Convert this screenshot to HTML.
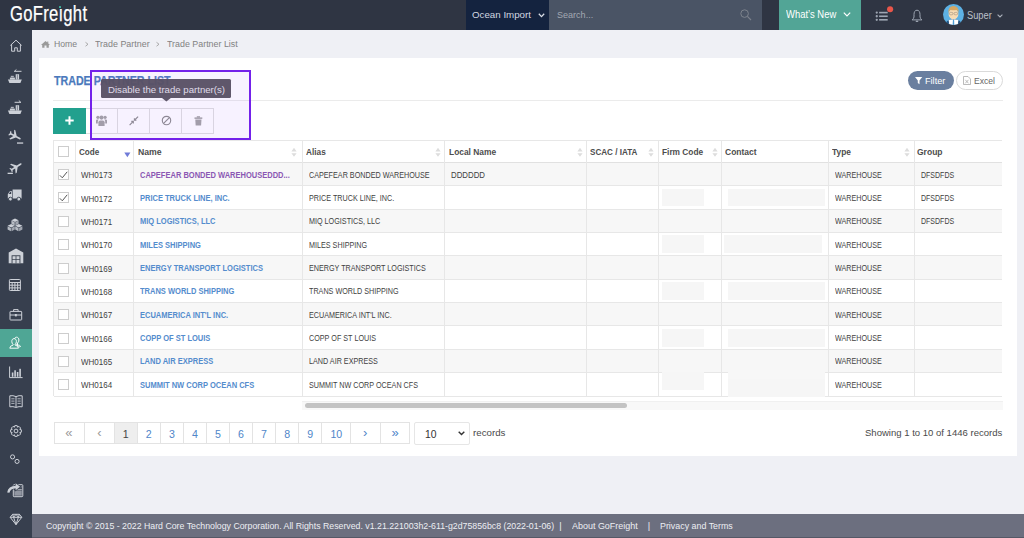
<!DOCTYPE html><html><head><meta charset='utf-8'><style>
*{margin:0;padding:0;box-sizing:border-box}
html,body{width:1024px;height:538px;overflow:hidden;background:#eff0f5;font-family:"Liberation Sans", sans-serif;}
.abs{position:absolute}
.t{position:absolute;white-space:nowrap;line-height:1}
svg{position:absolute;overflow:visible}
</style></head><body>
<div class="abs" style="left:0;top:0;width:1024px;height:30px;background:#2f3543"></div>
<div class="t" style="left:10.4px;top:2.92px;font-size:21.6px;color:#fff;transform-origin:0 0;transform:scaleX(0.77);letter-spacing:0.35px;-webkit-text-stroke:0.25px #fff">GoFre&#305;ght</div>
<div class="abs" style="left:59.2px;top:6.2px;width:2.1px;height:2.1px;border-radius:0.5px;background:#3fb59f"></div>
<div class="abs" style="left:466.4px;top:0;width:82.6px;height:29.8px;background:#14233f"></div>
<div class="t" style="left:471.50px;top:10.17px;font-size:9.6px;color:#d2d7e0;transform-origin:0 0;transform:scaleX(1.0145);">Ocean Import</div>
<svg style="left:538px;top:12.5px" width="7" height="5"><path d="M0.8 0.8 L3.5 3.6 L6.2 0.8" stroke="#d9dde6" stroke-width="1.3" fill="none"/></svg>
<div class="abs" style="left:549px;top:0;width:213.3px;height:29.8px;background:#4a5465"></div>
<div class="t" style="left:557.20px;top:10.07px;font-size:9.6px;color:#a2a8b2;transform-origin:0 0;transform:scaleX(0.9422);">Search...</div>
<svg style="left:740px;top:9px" width="12" height="12"><circle cx="4.6" cy="4.6" r="3.8" stroke="#7d838d" stroke-width="1" fill="none"/><path d="M7.4 7.4 L11 11" stroke="#7d838d" stroke-width="1.1"/></svg>
<div class="abs" style="left:779.2px;top:0;width:81.8px;height:29.8px;background:#52a596"></div>
<div class="t" style="left:786.30px;top:9.73px;font-size:10.0px;color:#fff;transform-origin:0 0;transform:scaleX(0.9442);">What’s New</div>
<svg style="left:843px;top:12px" width="8" height="5"><path d="M0.8 0.6 L4 3.8 L7.2 0.6" stroke="#fff" stroke-width="1.2" fill="none"/></svg>
<svg style="left:875px;top:11px" width="14" height="11"><circle cx="1.75" cy="1.6" r="1.15" fill="#9ea6b3"/><circle cx="1.75" cy="5.25" r="1.15" fill="#9ea6b3"/><circle cx="1.75" cy="8.8" r="1.15" fill="#9ea6b3"/><rect x="4.1" y="0.8" width="8.6" height="1.6" fill="#9ea6b3"/><rect x="4.1" y="4.45" width="8.6" height="1.6" fill="#9ea6b3"/><rect x="4.1" y="8" width="8.6" height="1.6" fill="#9ea6b3"/></svg>
<svg style="left:886.5px;top:6px" width="7" height="7"><circle cx="3.1" cy="3.2" r="3.05" fill="#e9564a"/></svg>
<svg style="left:910.5px;top:9px" width="12" height="14"><path d="M6 1.2 C3.9 1.2 3 3.1 3 5.6 L3 8 Q2.8 9.5 1.1 10.9 L10.9 10.9 Q9.2 9.5 9 8 L9 5.6 C9 3.1 8.1 1.2 6 1.2 Z" stroke="#9ea6b3" stroke-width="1" fill="none"/><path d="M4.9 11.9 Q6 13.2 7.1 11.9" stroke="#9ea6b3" stroke-width="1.1" fill="none"/></svg>
<svg style="left:942.9px;top:4px" width="21" height="21"><defs><clipPath id="avc"><circle cx="10.5" cy="10.5" r="10.5"/></clipPath></defs><circle cx="10.5" cy="10.5" r="10.5" fill="#5db1e4"/><g clip-path="url(#avc)"><path d="M1.5 22 Q2.5 15.6 10.5 15 Q18.5 15.6 19.5 22 Z" fill="#1f4f7c"/><path d="M5.6 16 Q10.5 14.3 15.4 16 L14.6 22 H6.4 Z" fill="#ffffff"/><path d="M10 15.2 H11 L11.4 22 H9.6 Z" fill="#4e9ed6"/><ellipse cx="10.5" cy="9.9" rx="4.9" ry="5.3" fill="#f8dcb4"/><path d="M5.4 9 Q5 2.1 10.5 2.1 Q16 2.1 15.6 9 Q15 6.2 13.5 5.9 Q10.5 6.6 7.5 5.9 Q6 6.2 5.4 9 Z" fill="#d6a763"/><rect x="6.5" y="8.4" width="3.4" height="2.4" rx="0.9" fill="none" stroke="#9b8a7a" stroke-width="0.55"/><rect x="11.1" y="8.4" width="3.4" height="2.4" rx="0.9" fill="none" stroke="#9b8a7a" stroke-width="0.55"/></g></svg>
<div class="t" style="left:966.50px;top:10.93px;font-size:10.0px;color:#bcc1ca;transform-origin:0 0;transform:scaleX(0.9293);">Super</div>
<svg style="left:997px;top:13.5px" width="6" height="4"><path d="M0.6 0.6 L3 3 L5.4 0.6" stroke="#aab0ba" stroke-width="1.1" fill="none"/></svg>
<div class="abs" style="left:0;top:30px;width:32px;height:508px;background:#373f4e"></div>
<div class="abs" style="left:0;top:328.7px;width:32px;height:28.2px;background:#4fa695"></div>
<svg style="left:41px;top:41px" width="9" height="7"><path d="M4.5 0 L0 3.9 L1.2 3.9 L1.2 6.8 L3.5 6.8 L3.5 4.6 L5.5 4.6 L5.5 6.8 L7.8 6.8 L7.8 3.9 L9 3.9 L7.3 2.4 L7.3 0.5 L6.3 0.5 L6.3 1.5 Z" fill="#9a9a9a"/></svg>
<div class="t" style="left:54.30px;top:39.09px;font-size:9.7px;color:#828282;transform-origin:0 0;transform:scaleX(0.8966);">Home</div>
<svg style="left:84.6px;top:42.2px" width="4" height="5"><path d="M0.5 0.3 L3 2.25 L0.5 4.2" stroke="#a0a0a0" stroke-width="0.9" fill="none"/></svg>
<div class="t" style="left:95.00px;top:39.09px;font-size:9.7px;color:#828282;transform-origin:0 0;transform:scaleX(0.9195);">Trade Partner</div>
<svg style="left:156.4px;top:42.2px" width="4" height="5"><path d="M0.5 0.3 L3 2.25 L0.5 4.2" stroke="#a0a0a0" stroke-width="0.9" fill="none"/></svg>
<div class="t" style="left:167.20px;top:39.09px;font-size:9.7px;color:#828282;transform-origin:0 0;transform:scaleX(0.9162);">Trade Partner List</div>
<div class="abs" style="left:39px;top:58px;width:977.5px;height:398px;background:#fff"></div>
<div class="t" style="left:54.00px;top:74.50px;font-size:12.4px;font-weight:bold;color:#4a79bc;transform-origin:0 0;transform:scaleX(0.8606);-webkit-text-stroke:0.25px #4a79bc">TRADE PARTNER LIST</div>
<div class="abs" style="left:53px;top:100px;width:949.5px;height:1px;background:#ebebeb"></div>
<div class="abs" style="left:908px;top:71px;width:45.7px;height:19px;border-radius:10px;background:#6a7f9f"></div>
<svg style="left:914.6px;top:77.4px" width="8" height="8"><path d="M0 0 L7.3 0 L4.5 3.4 L4.5 7.2 L2.8 6.1 L2.8 3.4 Z" fill="#fff"/></svg>
<div class="t" style="left:924.70px;top:75.96px;font-size:9.5px;color:#fff;transform-origin:0 0;transform:scaleX(0.9616);">Filter</div>
<div class="abs" style="left:956.4px;top:71px;width:46.2px;height:19px;border-radius:10px;background:#fff;border:1px solid #dadada"></div>
<svg style="left:963.4px;top:76.3px" width="8" height="9"><path d="M0.5 0.5 L5 0.5 L7.5 3 L7.5 8.5 L0.5 8.5 Z" stroke="#aaa" stroke-width="0.8" fill="none"/><path d="M2.3 3.8 L5.5 7.3 M5.5 3.8 L2.3 7.3" stroke="#aaa" stroke-width="0.8"/></svg>
<div class="t" style="left:974.00px;top:75.96px;font-size:9.5px;color:#666;transform-origin:0 0;transform:scaleX(0.9040);">Excel</div>
<div class="abs" style="left:53.2px;top:107.8px;width:32.6px;height:25.8px;background:#22a08e"></div>
<svg style="left:65px;top:116.2px" width="9" height="9"><path d="M4.5 0.3 V8.7 M0.3 4.5 H8.7" stroke="#fff" stroke-width="2"/></svg>
<div class="abs" style="left:85.8px;top:107.5px;width:128.3px;height:26.2px;border:1px solid #dfdfdf;border-left:none"></div>
<div class="abs" style="left:117.1px;top:107.5px;width:1px;height:26.2px;background:#dfdfdf"></div>
<div class="abs" style="left:148.9px;top:107.5px;width:1px;height:26.2px;background:#dfdfdf"></div>
<div class="abs" style="left:180.9px;top:107.5px;width:1px;height:26.2px;background:#dfdfdf"></div>
<svg style="left:96px;top:115px" width="11" height="11"><circle cx="5.5" cy="2.6" r="2.1" fill="#a3a3a3"/><circle cx="1.9" cy="2.3" r="1.6" fill="#a3a3a3"/><circle cx="9.1" cy="2.3" r="1.6" fill="#a3a3a3"/><path d="M2.4 10.9 V7.2 Q2.4 5.4 4.2 5.4 H6.8 Q8.6 5.4 8.6 7.2 V10.9 Z" fill="#a3a3a3"/><path d="M0 8.6 V5.6 Q0 4.4 1.2 4.4 H2.8 Q1.8 5.2 1.8 6.6 V8.6 Z M11 8.6 V5.6 Q11 4.4 9.8 4.4 H8.2 Q9.2 5.2 9.2 6.6 V8.6 Z" fill="#a3a3a3"/></svg>
<svg style="left:128.5px;top:116.2px" width="10" height="10"><path d="M0.6 9.1 L4 5.7 M5.7 4 L9.1 0.6" stroke="#8c8c8c" stroke-width="1.15"/><path d="M2.3 5.4 L4.3 5.4 L4.3 7.4 M5.4 2.3 L5.4 4.3 L7.4 4.3" stroke="#8c8c8c" stroke-width="1.1" fill="none"/></svg>
<svg style="left:160.5px;top:115.3px" width="11" height="11"><circle cx="5.5" cy="5.5" r="4.2" stroke="#8c8c8c" stroke-width="1.15" fill="none"/><path d="M2.6 8.4 L8.4 2.6" stroke="#8c8c8c" stroke-width="1.15"/></svg>
<svg style="left:193.5px;top:116px" width="9" height="10"><rect x="2.8" y="0.2" width="3.2" height="1.5" fill="#a3a3a3"/><rect x="0.5" y="1.4" width="7.8" height="1.5" fill="#a3a3a3"/><path d="M1.3 3.4 L7.5 3.4 L7.1 9.4 L1.7 9.4 Z" fill="#a3a3a3"/></svg>
<div class="abs" style="left:53.5px;top:162.50px;width:948.50px;height:23.35px;background:#f7f7f7"></div>
<div class="abs" style="left:53.5px;top:209.20px;width:948.50px;height:23.35px;background:#f7f7f7"></div>
<div class="abs" style="left:53.5px;top:255.90px;width:948.50px;height:23.35px;background:#f7f7f7"></div>
<div class="abs" style="left:53.5px;top:302.60px;width:948.50px;height:23.35px;background:#f7f7f7"></div>
<div class="abs" style="left:53.5px;top:349.30px;width:948.50px;height:23.35px;background:#f7f7f7"></div>
<div class="abs" style="left:53.5px;top:139.80px;width:948.50px;height:1px;background:#e7e7e7"></div>
<div class="abs" style="left:53.5px;top:161.70px;width:948.50px;height:1.6px;background:#e1e1e1"></div>
<div class="abs" style="left:53.5px;top:185.35px;width:948.50px;height:1px;background:#e7e7e7"></div>
<div class="abs" style="left:53.5px;top:208.70px;width:948.50px;height:1px;background:#e7e7e7"></div>
<div class="abs" style="left:53.5px;top:232.05px;width:948.50px;height:1px;background:#e7e7e7"></div>
<div class="abs" style="left:53.5px;top:255.40px;width:948.50px;height:1px;background:#e7e7e7"></div>
<div class="abs" style="left:53.5px;top:278.75px;width:948.50px;height:1px;background:#e7e7e7"></div>
<div class="abs" style="left:53.5px;top:302.10px;width:948.50px;height:1px;background:#e7e7e7"></div>
<div class="abs" style="left:53.5px;top:325.45px;width:948.50px;height:1px;background:#e7e7e7"></div>
<div class="abs" style="left:53.5px;top:348.80px;width:948.50px;height:1px;background:#e7e7e7"></div>
<div class="abs" style="left:53.5px;top:372.15px;width:948.50px;height:1px;background:#e7e7e7"></div>
<div class="abs" style="left:53.5px;top:395.50px;width:948.50px;height:1px;background:#e7e7e7"></div>
<div class="abs" style="left:53.00px;top:139.80px;width:1px;height:256.20px;background:#e7e7e7"></div>
<div class="abs" style="left:75.10px;top:139.80px;width:1px;height:256.20px;background:#e7e7e7"></div>
<div class="abs" style="left:133.20px;top:139.80px;width:1px;height:256.20px;background:#e7e7e7"></div>
<div class="abs" style="left:301.70px;top:139.80px;width:1px;height:256.20px;background:#e7e7e7"></div>
<div class="abs" style="left:443.90px;top:139.80px;width:1px;height:256.20px;background:#e7e7e7"></div>
<div class="abs" style="left:586.10px;top:139.80px;width:1px;height:256.20px;background:#e7e7e7"></div>
<div class="abs" style="left:657.50px;top:139.80px;width:1px;height:256.20px;background:#e7e7e7"></div>
<div class="abs" style="left:721.00px;top:139.80px;width:1px;height:256.20px;background:#e7e7e7"></div>
<div class="abs" style="left:828.30px;top:139.80px;width:1px;height:256.20px;background:#e7e7e7"></div>
<div class="abs" style="left:914.10px;top:139.80px;width:1px;height:256.20px;background:#e7e7e7"></div>
<div class="abs" style="left:662.00px;top:188.75px;width:42.20px;height:17.70px;background:#f6f6f6"></div>
<div class="abs" style="left:728.00px;top:188.75px;width:96.80px;height:17.70px;background:#f6f6f6"></div>
<div class="abs" style="left:662.00px;top:235.45px;width:42.20px;height:17.70px;background:#f6f6f6"></div>
<div class="abs" style="left:723.60px;top:235.45px;width:98.10px;height:17.70px;background:#f6f6f6"></div>
<div class="abs" style="left:662.00px;top:282.15px;width:42.20px;height:17.70px;background:#f6f6f6"></div>
<div class="abs" style="left:728.00px;top:282.15px;width:96.80px;height:17.70px;background:#f6f6f6"></div>
<div class="abs" style="left:662.00px;top:328.85px;width:42.20px;height:17.70px;background:#f6f6f6"></div>
<div class="abs" style="left:728.00px;top:328.85px;width:96.80px;height:17.70px;background:#f6f6f6"></div>
<div class="abs" style="left:662.00px;top:372.00px;width:42.20px;height:17.60px;background:#f6f6f6"></div>
<div class="abs" style="left:728.00px;top:366.00px;width:96.80px;height:13.40px;background:#f7f7f7"></div>
<div class="abs" style="left:728.00px;top:379.40px;width:96.80px;height:17.60px;background:#f6f6f6"></div>
<div class="t" style="left:78.90px;top:146.54px;font-size:9.4px;font-weight:bold;color:#4d4d4d;transform-origin:0 0;transform:scaleX(0.8638);">Code</div>
<div class="t" style="left:137.70px;top:146.54px;font-size:9.4px;font-weight:bold;color:#4d4d4d;transform-origin:0 0;transform:scaleX(0.9257);">Name</div>
<svg style="left:291.40px;top:146.7px" width="6" height="11"><path d="M0.4 4.4 L3 0.8 L5.6 4.4Z M0.4 6.2 L3 9.8 L5.6 6.2Z" fill="#dddddd"/></svg>
<div class="t" style="left:306.00px;top:146.54px;font-size:9.4px;font-weight:bold;color:#4d4d4d;transform-origin:0 0;transform:scaleX(0.8800);">Alias</div>
<svg style="left:434.80px;top:146.7px" width="6" height="11"><path d="M0.4 4.4 L3 0.8 L5.6 4.4Z M0.4 6.2 L3 9.8 L5.6 6.2Z" fill="#dddddd"/></svg>
<div class="t" style="left:448.70px;top:146.54px;font-size:9.4px;font-weight:bold;color:#4d4d4d;transform-origin:0 0;transform:scaleX(0.8964);">Local Name</div>
<svg style="left:577.00px;top:146.7px" width="6" height="11"><path d="M0.4 4.4 L3 0.8 L5.6 4.4Z M0.4 6.2 L3 9.8 L5.6 6.2Z" fill="#dddddd"/></svg>
<div class="t" style="left:590.30px;top:146.54px;font-size:9.4px;font-weight:bold;color:#4d4d4d;transform-origin:0 0;transform:scaleX(0.8636);">SCAC / IATA</div>
<svg style="left:648.30px;top:146.7px" width="6" height="11"><path d="M0.4 4.4 L3 0.8 L5.6 4.4Z M0.4 6.2 L3 9.8 L5.6 6.2Z" fill="#dddddd"/></svg>
<div class="t" style="left:661.60px;top:146.54px;font-size:9.4px;font-weight:bold;color:#4d4d4d;transform-origin:0 0;transform:scaleX(0.8864);">Firm Code</div>
<svg style="left:711.70px;top:146.7px" width="6" height="11"><path d="M0.4 4.4 L3 0.8 L5.6 4.4Z M0.4 6.2 L3 9.8 L5.6 6.2Z" fill="#dddddd"/></svg>
<div class="t" style="left:725.30px;top:146.54px;font-size:9.4px;font-weight:bold;color:#4d4d4d;transform-origin:0 0;transform:scaleX(0.9060);">Contact</div>
<div class="t" style="left:832.30px;top:146.54px;font-size:9.4px;font-weight:bold;color:#4d4d4d;transform-origin:0 0;transform:scaleX(0.8944);">Type</div>
<svg style="left:904.30px;top:146.7px" width="6" height="11"><path d="M0.4 4.4 L3 0.8 L5.6 4.4Z M0.4 6.2 L3 9.8 L5.6 6.2Z" fill="#dddddd"/></svg>
<div class="t" style="left:917.40px;top:146.54px;font-size:9.4px;font-weight:bold;color:#4d4d4d;transform-origin:0 0;transform:scaleX(0.9079);">Group</div>
<svg style="left:123.6px;top:151.8px" width="7" height="6"><path d="M0.3 0.4 L6.4 0.4 L3.35 5.2 Z" fill="#707bd8"/></svg>
<div class="abs" style="left:58px;top:146px;width:11px;height:11px;border:1px solid #cdcdcd;background:#fff"></div>
<div class="abs" style="left:58px;top:169.10px;width:11px;height:11px;border:1px solid #cdcdcd;background:#fff"></div>
<svg style="left:59px;top:170.50px" width="9" height="8"><path d="M0.8 4.3 L3.3 6.8 L8.2 0.8" stroke="#555" stroke-width="1" fill="none"/></svg>
<div class="t" style="left:81.30px;top:171.30px;font-size:8.5px;color:#3f3f3f;transform-origin:0 0;transform:scaleX(0.9400);">WH0173</div>
<div class="t" style="left:140.00px;top:170.67px;font-size:8.3px;font-weight:bold;color:#8a57b3;transform-origin:0 0;transform:scaleX(0.9050);">CAPEFEAR BONDED WAREHOUSEDDD...</div>
<div class="t" style="left:308.80px;top:171.56px;font-size:8.2px;color:#3f3f3f;transform-origin:0 0;transform:scaleX(0.8800);">CAPEFEAR BONDED WAREHOUSE</div>
<div class="t" style="left:450.60px;top:171.56px;font-size:8.2px;color:#3f3f3f;transform-origin:0 0;transform:scaleX(0.9597);">DDDDDD</div>
<div class="t" style="left:835.10px;top:171.56px;font-size:8.2px;color:#3f3f3f;transform-origin:0 0;transform:scaleX(0.8773);">WAREHOUSE</div>
<div class="t" style="left:920.60px;top:171.56px;font-size:8.2px;color:#3f3f3f;transform-origin:0 0;transform:scaleX(0.8574);">DFSDFDS</div>
<div class="abs" style="left:58px;top:192.45px;width:11px;height:11px;border:1px solid #cdcdcd;background:#fff"></div>
<svg style="left:59px;top:193.85px" width="9" height="8"><path d="M0.8 4.3 L3.3 6.8 L8.2 0.8" stroke="#555" stroke-width="1" fill="none"/></svg>
<div class="t" style="left:81.30px;top:194.65px;font-size:8.5px;color:#3f3f3f;transform-origin:0 0;transform:scaleX(0.9400);">WH0172</div>
<div class="t" style="left:140.00px;top:194.02px;font-size:8.3px;font-weight:bold;color:#548ccd;transform-origin:0 0;transform:scaleX(0.9050);">PRICE TRUCK LINE, INC.</div>
<div class="t" style="left:308.80px;top:194.91px;font-size:8.2px;color:#3f3f3f;transform-origin:0 0;transform:scaleX(0.8800);">PRICE TRUCK LINE, INC.</div>
<div class="t" style="left:835.10px;top:194.91px;font-size:8.2px;color:#3f3f3f;transform-origin:0 0;transform:scaleX(0.8773);">WAREHOUSE</div>
<div class="t" style="left:920.60px;top:194.91px;font-size:8.2px;color:#3f3f3f;transform-origin:0 0;transform:scaleX(0.8574);">DFSDFDS</div>
<div class="abs" style="left:58px;top:215.80px;width:11px;height:11px;border:1px solid #cdcdcd;background:#fff"></div>
<div class="t" style="left:81.30px;top:218.00px;font-size:8.5px;color:#3f3f3f;transform-origin:0 0;transform:scaleX(0.9400);">WH0171</div>
<div class="t" style="left:140.00px;top:217.37px;font-size:8.3px;font-weight:bold;color:#548ccd;transform-origin:0 0;transform:scaleX(0.9050);">MIQ LOGISTICS, LLC</div>
<div class="t" style="left:308.80px;top:218.26px;font-size:8.2px;color:#3f3f3f;transform-origin:0 0;transform:scaleX(0.8800);">MIQ LOGISTICS, LLC</div>
<div class="t" style="left:835.10px;top:218.26px;font-size:8.2px;color:#3f3f3f;transform-origin:0 0;transform:scaleX(0.8773);">WAREHOUSE</div>
<div class="t" style="left:920.60px;top:218.26px;font-size:8.2px;color:#3f3f3f;transform-origin:0 0;transform:scaleX(0.8574);">DFSDFDS</div>
<div class="abs" style="left:58px;top:239.15px;width:11px;height:11px;border:1px solid #cdcdcd;background:#fff"></div>
<div class="t" style="left:81.30px;top:241.35px;font-size:8.5px;color:#3f3f3f;transform-origin:0 0;transform:scaleX(0.9400);">WH0170</div>
<div class="t" style="left:140.00px;top:240.72px;font-size:8.3px;font-weight:bold;color:#548ccd;transform-origin:0 0;transform:scaleX(0.9050);">MILES SHIPPING</div>
<div class="t" style="left:308.80px;top:241.61px;font-size:8.2px;color:#3f3f3f;transform-origin:0 0;transform:scaleX(0.8800);">MILES SHIPPING</div>
<div class="t" style="left:835.10px;top:241.61px;font-size:8.2px;color:#3f3f3f;transform-origin:0 0;transform:scaleX(0.8773);">WAREHOUSE</div>
<div class="abs" style="left:58px;top:262.50px;width:11px;height:11px;border:1px solid #cdcdcd;background:#fff"></div>
<div class="t" style="left:81.30px;top:264.70px;font-size:8.5px;color:#3f3f3f;transform-origin:0 0;transform:scaleX(0.9400);">WH0169</div>
<div class="t" style="left:140.00px;top:264.07px;font-size:8.3px;font-weight:bold;color:#548ccd;transform-origin:0 0;transform:scaleX(0.9050);">ENERGY TRANSPORT LOGISTICS</div>
<div class="t" style="left:308.80px;top:264.96px;font-size:8.2px;color:#3f3f3f;transform-origin:0 0;transform:scaleX(0.8800);">ENERGY TRANSPORT LOGISTICS</div>
<div class="t" style="left:835.10px;top:264.96px;font-size:8.2px;color:#3f3f3f;transform-origin:0 0;transform:scaleX(0.8773);">WAREHOUSE</div>
<div class="abs" style="left:58px;top:285.85px;width:11px;height:11px;border:1px solid #cdcdcd;background:#fff"></div>
<div class="t" style="left:81.30px;top:288.05px;font-size:8.5px;color:#3f3f3f;transform-origin:0 0;transform:scaleX(0.9400);">WH0168</div>
<div class="t" style="left:140.00px;top:287.42px;font-size:8.3px;font-weight:bold;color:#548ccd;transform-origin:0 0;transform:scaleX(0.9050);">TRANS WORLD SHIPPING</div>
<div class="t" style="left:308.80px;top:288.31px;font-size:8.2px;color:#3f3f3f;transform-origin:0 0;transform:scaleX(0.8800);">TRANS WORLD SHIPPING</div>
<div class="t" style="left:835.10px;top:288.31px;font-size:8.2px;color:#3f3f3f;transform-origin:0 0;transform:scaleX(0.8773);">WAREHOUSE</div>
<div class="abs" style="left:58px;top:309.20px;width:11px;height:11px;border:1px solid #cdcdcd;background:#fff"></div>
<div class="t" style="left:81.30px;top:311.40px;font-size:8.5px;color:#3f3f3f;transform-origin:0 0;transform:scaleX(0.9400);">WH0167</div>
<div class="t" style="left:140.00px;top:310.77px;font-size:8.3px;font-weight:bold;color:#548ccd;transform-origin:0 0;transform:scaleX(0.9050);">ECUAMERICA INT'L INC.</div>
<div class="t" style="left:308.80px;top:311.66px;font-size:8.2px;color:#3f3f3f;transform-origin:0 0;transform:scaleX(0.8800);">ECUAMERICA INT'L INC.</div>
<div class="t" style="left:835.10px;top:311.66px;font-size:8.2px;color:#3f3f3f;transform-origin:0 0;transform:scaleX(0.8773);">WAREHOUSE</div>
<div class="abs" style="left:58px;top:332.55px;width:11px;height:11px;border:1px solid #cdcdcd;background:#fff"></div>
<div class="t" style="left:81.30px;top:334.75px;font-size:8.5px;color:#3f3f3f;transform-origin:0 0;transform:scaleX(0.9400);">WH0166</div>
<div class="t" style="left:140.00px;top:334.12px;font-size:8.3px;font-weight:bold;color:#548ccd;transform-origin:0 0;transform:scaleX(0.9050);">COPP OF ST LOUIS</div>
<div class="t" style="left:308.80px;top:335.01px;font-size:8.2px;color:#3f3f3f;transform-origin:0 0;transform:scaleX(0.8800);">COPP OF ST LOUIS</div>
<div class="t" style="left:835.10px;top:335.01px;font-size:8.2px;color:#3f3f3f;transform-origin:0 0;transform:scaleX(0.8773);">WAREHOUSE</div>
<div class="abs" style="left:58px;top:355.90px;width:11px;height:11px;border:1px solid #cdcdcd;background:#fff"></div>
<div class="t" style="left:81.30px;top:358.10px;font-size:8.5px;color:#3f3f3f;transform-origin:0 0;transform:scaleX(0.9400);">WH0165</div>
<div class="t" style="left:140.00px;top:357.47px;font-size:8.3px;font-weight:bold;color:#548ccd;transform-origin:0 0;transform:scaleX(0.9050);">LAND AIR EXPRESS</div>
<div class="t" style="left:308.80px;top:358.36px;font-size:8.2px;color:#3f3f3f;transform-origin:0 0;transform:scaleX(0.8800);">LAND AIR EXPRESS</div>
<div class="t" style="left:835.10px;top:358.36px;font-size:8.2px;color:#3f3f3f;transform-origin:0 0;transform:scaleX(0.8773);">WAREHOUSE</div>
<div class="abs" style="left:58px;top:379.25px;width:11px;height:11px;border:1px solid #cdcdcd;background:#fff"></div>
<div class="t" style="left:81.30px;top:381.45px;font-size:8.5px;color:#3f3f3f;transform-origin:0 0;transform:scaleX(0.9400);">WH0164</div>
<div class="t" style="left:140.00px;top:380.82px;font-size:8.3px;font-weight:bold;color:#548ccd;transform-origin:0 0;transform:scaleX(0.9050);">SUMMIT NW CORP OCEAN CFS</div>
<div class="t" style="left:308.80px;top:381.71px;font-size:8.2px;color:#3f3f3f;transform-origin:0 0;transform:scaleX(0.8800);">SUMMIT NW CORP OCEAN CFS</div>
<div class="t" style="left:835.10px;top:381.71px;font-size:8.2px;color:#3f3f3f;transform-origin:0 0;transform:scaleX(0.8773);">WAREHOUSE</div>
<div class="abs" style="left:302px;top:400.5px;width:701px;height:9.5px;background:#f8f8f8;border-top:1px solid #f0f0f0"></div>
<div class="abs" style="left:304.5px;top:403.3px;width:322.5px;height:4.6px;border-radius:3px;background:#c3c3c3"></div>
<div class="abs" style="left:53.5px;top:422.2px;width:356.90px;height:22.20px;border:1px solid #e3e3e3"></div>
<div class="abs" style="left:114.5px;top:423.2px;width:22.50px;height:20.20px;background:#eeeeee"></div>
<div class="abs" style="left:83.80px;top:422.2px;width:1px;height:22.20px;background:#e3e3e3"></div>
<div class="abs" style="left:114.00px;top:422.2px;width:1px;height:22.20px;background:#e3e3e3"></div>
<div class="abs" style="left:136.50px;top:422.2px;width:1px;height:22.20px;background:#e3e3e3"></div>
<div class="abs" style="left:160.00px;top:422.2px;width:1px;height:22.20px;background:#e3e3e3"></div>
<div class="abs" style="left:182.90px;top:422.2px;width:1px;height:22.20px;background:#e3e3e3"></div>
<div class="abs" style="left:205.80px;top:422.2px;width:1px;height:22.20px;background:#e3e3e3"></div>
<div class="abs" style="left:229.00px;top:422.2px;width:1px;height:22.20px;background:#e3e3e3"></div>
<div class="abs" style="left:251.80px;top:422.2px;width:1px;height:22.20px;background:#e3e3e3"></div>
<div class="abs" style="left:275.30px;top:422.2px;width:1px;height:22.20px;background:#e3e3e3"></div>
<div class="abs" style="left:298.20px;top:422.2px;width:1px;height:22.20px;background:#e3e3e3"></div>
<div class="abs" style="left:321.20px;top:422.2px;width:1px;height:22.20px;background:#e3e3e3"></div>
<div class="abs" style="left:349.80px;top:422.2px;width:1px;height:22.20px;background:#e3e3e3"></div>
<div class="abs" style="left:379.50px;top:422.2px;width:1px;height:22.20px;background:#e3e3e3"></div>
<div class="t" style="left:65.28px;top:425.90px;font-size:13px;color:#9a9a9a;">«</div>
<div class="t" style="left:97.24px;top:425.90px;font-size:13px;color:#9a9a9a;">‹</div>
<div class="t" style="left:122.80px;top:428.73px;font-size:10.6px;color:#444;">1</div>
<div class="t" style="left:145.80px;top:428.73px;font-size:10.6px;color:#4f86c9;">2</div>
<div class="t" style="left:169.00px;top:428.73px;font-size:10.6px;color:#4f86c9;">3</div>
<div class="t" style="left:191.90px;top:428.73px;font-size:10.6px;color:#4f86c9;">4</div>
<div class="t" style="left:214.95px;top:428.73px;font-size:10.6px;color:#4f86c9;">5</div>
<div class="t" style="left:237.95px;top:428.73px;font-size:10.6px;color:#4f86c9;">6</div>
<div class="t" style="left:261.10px;top:428.73px;font-size:10.6px;color:#4f86c9;">7</div>
<div class="t" style="left:284.30px;top:428.73px;font-size:10.6px;color:#4f86c9;">8</div>
<div class="t" style="left:307.25px;top:428.73px;font-size:10.6px;color:#4f86c9;">9</div>
<div class="t" style="left:330.40px;top:428.73px;font-size:10.6px;color:#4f86c9;">10</div>
<div class="t" style="left:362.99px;top:425.90px;font-size:13px;color:#4f86c9;">›</div>
<div class="t" style="left:391.58px;top:425.90px;font-size:13px;color:#4f86c9;">»</div>
<div class="abs" style="left:413.5px;top:421.6px;width:56px;height:23.6px;border:1px solid #e6e6e6;border-radius:2px;background:#fff"></div>
<div class="t" style="left:425.30px;top:428.63px;font-size:10.6px;color:#333;transform-origin:0 0;transform:scaleX(0.9753);">10</div>
<svg style="left:458.3px;top:431.3px" width="7" height="5"><path d="M0.7 0.7 L3.5 3.5 L6.3 0.7" stroke="#333" stroke-width="1.4" fill="none"/></svg>
<div class="t" style="left:472.60px;top:427.50px;font-size:9.8px;color:#4a4a4a;transform-origin:0 0;transform:scaleX(0.9915);">records</div>
<div class="t" style="left:864.50px;top:428.00px;font-size:9.8px;color:#4a4a4a;transform-origin:0 0;transform:scaleX(0.9730);">Showing 1 to 10 of 1446 records</div>
<div class="abs" style="left:32px;top:513.6px;width:992px;height:24.4px;background:#6c6f7f"></div>
<div class="abs" style="left:32px;top:536.6px;width:992px;height:1.4px;background:#555866"></div>
<div class="t" style="left:46.40px;top:521.63px;font-size:9.3px;color:#eceef3;transform-origin:0 0;transform:scaleX(0.9421);">Copyright © 2015 - 2022 Hard Core Technology Corporation. All Rights Reserved. v1.21.221003h2-611-g2d75856bc8 (2022-01-06)</div>
<div class="t" style="left:559.30px;top:522.13px;font-size:9.3px;color:#eceef3;">|</div>
<div class="t" style="left:571.60px;top:521.63px;font-size:9.3px;color:#eceef3;transform-origin:0 0;transform:scaleX(0.9628);">About GoFreight</div>
<div class="t" style="left:647.80px;top:522.13px;font-size:9.3px;color:#eceef3;">|</div>
<div class="t" style="left:660.20px;top:521.63px;font-size:9.3px;color:#eceef3;transform-origin:0 0;transform:scaleX(0.9538);">Privacy and Terms</div>
<svg style="left:7.70px;top:37.60px" width="16" height="16" viewBox="0 0 16 16"><path d="M2.4 7.4 L8 2.2 L13.6 7.4 M3.6 6.4 V13.2 H6.7 V9.8 H9.3 V13.2 H12.4 V6.4" stroke="#cdd1d8" fill="none" stroke-width="1" stroke-width="0.9"/></svg>
<svg style="left:7.30px;top:67.80px" width="16" height="16" viewBox="0 0 16 16"><path d="M7.2 3.3 H14.5 M7.4 3.3 L9.4 1.5" stroke="#cdd1d8" fill="none" stroke-width="1" stroke-width="1.2"/><rect x="8.7" y="6.2" width="3.4" height="5.4" fill="#cdd1d8"/><path d="M10.4 6.6 V11.4" stroke="#373f4e" stroke-width="0.5"/><rect x="2.9" y="9.6" width="5" height="2" fill="#cdd1d8"/><rect x="3.8" y="7.8" width="3" height="1.5" fill="#cdd1d8" opacity="0.8"/><path d="M0.9 11.6 H14.8 L13.4 15 H2.4 Z" fill="#cdd1d8"/></svg>
<svg style="left:7.30px;top:98.70px" width="16" height="16" viewBox="0 0 16 16"><path d="M7.6 3.3 H14 M13.8 3.3 L11.8 1.5" stroke="#cdd1d8" fill="none" stroke-width="1" stroke-width="1.2"/><rect x="8.7" y="6.2" width="3.4" height="5.4" fill="#cdd1d8"/><path d="M10.4 6.6 V11.4" stroke="#373f4e" stroke-width="0.5"/><rect x="2.9" y="9.6" width="5" height="2" fill="#cdd1d8"/><rect x="3.8" y="7.8" width="3" height="1.5" fill="#cdd1d8" opacity="0.8"/><path d="M0.9 11.6 H14.8 L13.4 15 H2.4 Z" fill="#cdd1d8"/></svg>
<svg style="left:6.7px;top:128px" width="16" height="16"><path d="M15 8 Q15 7.1 13.6 7.1 L9.6 7.1 L5.4 2.4 L4.0 2.4 L6.4 7.1 L3.2 7.1 L2.1 5.5 L1.1 5.5 L1.7 8 L1.1 10.5 L2.1 10.5 L3.2 8.9 L6.4 8.9 L4.0 13.6 L5.4 13.6 L9.6 8.9 L13.6 8.9 Q15 8.9 15 8 Z" fill="#cdd1d8" transform="rotate(28 8 8) scale(0.93) translate(0.6 0.6)"/></svg>
<svg style="left:0;top:0" width="32" height="538"><rect x="17" y="142.4" width="6.2" height="1.3" fill="#cdd1d8"/><rect x="7.6" y="172.7" width="5.3" height="1.3" fill="#cdd1d8"/></svg>
<svg style="left:8px;top:158.5px" width="16" height="16"><path d="M15 8 Q15 7.1 13.6 7.1 L9.6 7.1 L5.4 2.4 L4.0 2.4 L6.4 7.1 L3.2 7.1 L2.1 5.5 L1.1 5.5 L1.7 8 L1.1 10.5 L2.1 10.5 L3.2 8.9 L6.4 8.9 L4.0 13.6 L5.4 13.6 L9.6 8.9 L13.6 8.9 Q15 8.9 15 8 Z" fill="#cdd1d8" transform="rotate(-32 8 8) scale(0.93) translate(0.6 0.6)"/></svg>
<svg style="left:7.00px;top:187.20px" width="16" height="16" viewBox="0 0 16 16"><path d="M5.6 2.6 H14.6 V11.4 H5.6 Z M0.8 7.2 L2.8 4.3 H5 V11.4 H0.8 Z" fill="#cdd1d8"/><path d="M1.8 7.1 L3.2 5.1 H4.2 V7.1 Z" fill="#373f4e"/><circle cx="3.4" cy="12.1" r="1.9" fill="#cdd1d8" stroke="#373f4e" stroke-width="0.9"/><circle cx="11.8" cy="12.1" r="1.9" fill="#cdd1d8" stroke="#373f4e" stroke-width="0.9"/></svg>
<svg style="left:7.00px;top:216.80px" width="16" height="16" viewBox="0 0 16 16"><path d="M8 1.4000000000000001 L11.6 3.2 L8 5.0 L4.4 3.2 Z" fill="#cdd1d8"/><path d="M4.4 3.6 L7.7 5.3 L7.7 8.600000000000001 L4.4 6.800000000000001 Z" fill="#cdd1d8" opacity="0.85"/><path d="M11.6 3.6 L8.3 5.3 L8.3 8.600000000000001 L11.6 6.800000000000001 Z" fill="#cdd1d8" opacity="0.7"/><path d="M4.2 7.000000000000001 L7.800000000000001 8.8 L4.2 10.600000000000001 L0.6000000000000001 8.8 Z" fill="#cdd1d8"/><path d="M0.6000000000000001 9.200000000000001 L3.9000000000000004 10.900000000000002 L3.9000000000000004 14.200000000000001 L0.6000000000000001 12.4 Z" fill="#cdd1d8" opacity="0.85"/><path d="M7.800000000000001 9.200000000000001 L4.5 10.900000000000002 L4.5 14.200000000000001 L7.800000000000001 12.4 Z" fill="#cdd1d8" opacity="0.7"/><path d="M11.8 7.000000000000001 L15.4 8.8 L11.8 10.600000000000001 L8.200000000000001 8.8 Z" fill="#cdd1d8"/><path d="M8.200000000000001 9.200000000000001 L11.5 10.900000000000002 L11.5 14.200000000000001 L8.200000000000001 12.4 Z" fill="#cdd1d8" opacity="0.85"/><path d="M15.4 9.200000000000001 L12.100000000000001 10.900000000000002 L12.100000000000001 14.200000000000001 L15.4 12.4 Z" fill="#cdd1d8" opacity="0.7"/></svg>
<svg style="left:7.50px;top:247.60px" width="16" height="16" viewBox="0 0 16 16"><path d="M8 0.6 L15.3 4.6 V15.2 H0.7 V4.6 Z" fill="#cdd1d8"/><rect x="3.6" y="7.3" width="8.8" height="7.9" fill="#373f4e"/><rect x="4.5" y="8.2" width="3.1" height="2.9" fill="#cdd1d8"/><rect x="8.4" y="8.2" width="3.1" height="2.9" fill="#cdd1d8"/><rect x="4.5" y="11.8" width="3.1" height="3.4" fill="#cdd1d8"/><rect x="8.4" y="11.8" width="3.1" height="3.4" fill="#cdd1d8"/></svg>
<svg style="left:6.60px;top:276.90px" width="16" height="16" viewBox="0 0 16 16"><rect x="2.4" y="2.5" width="11" height="11" rx="0.8" stroke="#cdd1d8" fill="none" stroke-width="1"/><path d="M2.4 5.5 H13.4 M2.4 8.2 H13.4 M2.4 10.9 H13.4 M5.15 5.5 V13.5 M7.9 5.5 V13.5 M10.65 5.5 V13.5" stroke="#cdd1d8" fill="none" stroke-width="1" stroke-width="0.9"/></svg>
<svg style="left:7.70px;top:307.00px" width="16" height="16" viewBox="0 0 16 16"><rect x="2" y="4.4" width="11.7" height="8.6" rx="0.6" stroke="#cdd1d8" fill="none" stroke-width="1"/><path d="M5.6 4.4 V2.6 H10.1 V4.4 M2 8 H13.7" stroke="#cdd1d8" fill="none" stroke-width="1"/><rect x="6.9" y="7" width="1.9" height="2.4" fill="#cdd1d8"/></svg>
<svg style="left:7.30px;top:335.20px" width="16" height="16" viewBox="0 0 16 16"><path d="M9.6 2.2 C8.2 2.2 7.3 3.3 7.3 5 C7.3 6.4 7.9 7.5 8.6 8 V8.8 Q8.6 9.4 9.4 9.6 Q13.6 10.3 13.6 11.4 Q13.2 11.9 12.2 11.9 L10.5 11.9 L10.5 8 Q11.9 7.1 11.9 5 C11.9 3.3 11 2.2 9.6 2.2 Z" stroke="#ffffff" fill="#4fa695" stroke-width="0.95"/><path d="M7.1 3.6 C5.6 3.6 4.8 4.8 4.8 6.4 C4.8 7.8 5.3 8.8 6.1 9.4 V10.1 Q2.8 10.7 2.8 13.2 H11.4 Q11.4 10.7 8.1 10.1 V9.4 C8.9 8.8 9.4 7.8 9.4 6.4 C9.4 4.8 8.6 3.6 7.1 3.6 Z" stroke="#ffffff" fill="#4fa695" stroke-width="0.95"/></svg>
<svg style="left:7.50px;top:364.00px" width="16" height="16" viewBox="0 0 16 16"><path d="M1.6 2.5 V13.6 H14.6" stroke="#cdd1d8" fill="none" stroke-width="1"/><rect x="3.8" y="8.5" width="1.6" height="4.3" fill="#cdd1d8"/><rect x="6.3" y="6.3" width="1.6" height="6.5" fill="#cdd1d8"/><rect x="8.8" y="8" width="1.6" height="4.8" fill="#cdd1d8"/><rect x="11.3" y="4.8" width="1.6" height="8" fill="#cdd1d8"/></svg>
<svg style="left:7.50px;top:393.20px" width="16" height="16" viewBox="0 0 16 16"><path d="M1.8 2.8 Q5 2.2 8 3.6 Q11 2.2 14.2 2.8 V13.8 Q11 13.2 8 14.4 Q5 13.2 1.8 13.8 Z M8 3.6 V14.4" stroke="#cdd1d8" fill="none" stroke-width="1"/><path d="M3.3 5.8 H6.5 M3.3 8.1 H6.5 M3.3 10.4 H6.5 M9.5 5.8 H12.7 M9.5 8.1 H12.7 M9.5 10.4 H12.7" stroke="#cdd1d8" stroke-width="0.8"/></svg>
<svg style="left:7.80px;top:422.50px" width="16" height="16" viewBox="0 0 16 16"><path d="M13.37 6.80 L13.37 9.20 L11.79 9.56 L11.78 9.58 L12.64 10.95 L10.95 12.64 L9.58 11.78 L9.56 11.79 L9.20 13.37 L6.80 13.37 L6.44 11.79 L6.42 11.78 L5.05 12.64 L3.36 10.95 L4.22 9.58 L4.21 9.56 L2.63 9.20 L2.63 6.80 L4.21 6.44 L4.22 6.42 L3.36 5.05 L5.05 3.36 L6.42 4.22 L6.44 4.21 L6.80 2.63 L9.20 2.63 L9.56 4.21 L9.58 4.22 L10.95 3.36 L12.64 5.05 L11.78 6.42 L11.79 6.44 Z" stroke="#cdd1d8" fill="none" stroke-width="1"/><circle cx="8" cy="8" r="1.9" stroke="#cdd1d8" fill="none" stroke-width="1"/></svg>
<svg style="left:7.20px;top:450.50px" width="16" height="16" viewBox="0 0 16 16"><circle cx="5.55" cy="5.9" r="2.05" stroke="#cdd1d8" fill="none" stroke-width="1" stroke-width="1.8"/><circle cx="10.05" cy="10.4" r="2.05" stroke="#cdd1d8" fill="none" stroke-width="1" stroke-width="1.8"/></svg>
<svg style="left:7.50px;top:481.60px" width="16" height="16" viewBox="0 0 16 16"><rect x="5.3" y="2.7" width="9.5" height="12" rx="0.8" stroke="#cdd1d8" fill="none" stroke-width="1"/><rect x="6.3" y="8.4" width="7.5" height="5.3" fill="#cdd1d8" opacity="0.6"/><path d="M9 4.9 H13.8 M9 7.4 H13.8" stroke="#cdd1d8" stroke-width="0.8"/><path d="M0.3 10.6 Q1.2 5.4 8 5" stroke="#373f4e" stroke-width="4" fill="none"/><path d="M7 0 L13.4 4.7 L7 9.4 Z" fill="#373f4e"/><path d="M0.3 10.6 Q1.2 5.4 8 5" stroke="#cdd1d8" stroke-width="2.3" fill="none"/><path d="M7.6 1.3 L12.1 4.8 L7.6 8.2 Z" fill="#cdd1d8"/></svg>
<svg style="left:7.70px;top:510.80px" width="16" height="16" viewBox="0 0 16 16"><path d="M4.6 3.3 H11.4 L13.8 6.3 L8 13.6 L2.2 6.3 Z M2.2 6.3 H13.8 M5.6 6.3 L8 13.6 L10.4 6.3 M4.6 3.3 L5.6 6.3 L8 3.3 L10.4 6.3 L11.4 3.3" stroke="#cdd1d8" fill="none" stroke-width="1" stroke-width="0.95"/></svg>
<div class="abs" style="left:101.1px;top:79.2px;width:130.1px;height:19px;border-radius:1.5px;background:rgba(82,79,86,0.96)"></div>
<svg style="left:161.6px;top:98.2px" width="9" height="4"><path d="M0 0 L4.4 3.6 L8.8 0 Z" fill="rgba(82,79,86,0.96)"/></svg>
<div class="t" style="left:107.70px;top:84.54px;font-size:9.4px;color:#e6e4ea;transform-origin:0 0;transform:scaleX(1.0251);">Disable the trade partner(s)</div>
<div class="abs" style="left:90px;top:69.5px;width:161px;height:70px;border:2px solid #7321ea;background:rgba(165,105,255,0.085)"></div>
</body></html>
